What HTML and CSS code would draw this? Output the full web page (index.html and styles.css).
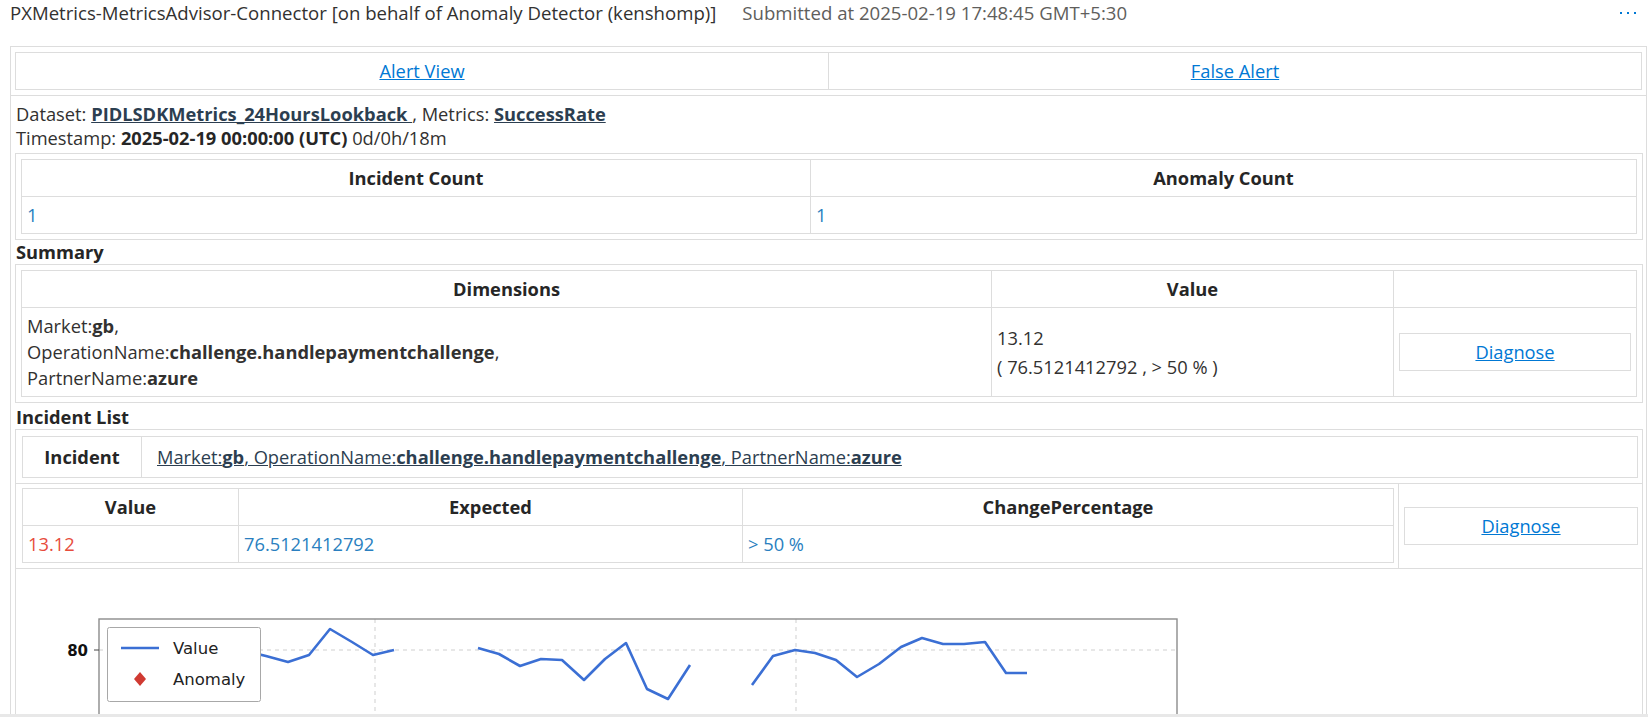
FILE: index.html
```html
<!DOCTYPE html>
<html lang="en">
<head>
<meta charset="utf-8">
<title>Alert</title>
<link rel="stylesheet" href="styles.css">
</head>
<body>
<header class="topbar">
  <span class="subject">PXMetrics-MetricsAdvisor-Connector [on behalf of Anomaly Detector (kenshomp)]</span>
  <span class="submitted">Submitted at 2025-02-19 17:48:45 GMT+5:30</span>
  <span class="more" aria-label="More actions"><i></i><i></i><i></i></span>
</header>

<div class="mail">
  <div class="actions-row">
    <table class="grid actions">
      <tr>
        <td><a href="#" class="link">Alert View</a></td>
        <td><a href="#" class="link">False Alert</a></td>
      </tr>
    </table>
  </div>

  <div class="body-row">
    <div class="meta">
      Dataset: <a href="#" class="dark-link">PIDLSDKMetrics_24HoursLookback </a>, Metrics: <a href="#" class="dark-link">SuccessRate</a><br>
      Timestamp: <b>2025-02-19 00:00:00 (UTC)</b> 0d/0h/18m
    </div>

    <div class="box first">
      <table class="grid counts">
        <colgroup><col class="c-incident"><col></colgroup>
        <tr><th>Incident Count</th><th>Anomaly Count</th></tr>
        <tr><td class="num">1</td><td class="num">1</td></tr>
      </table>
    </div>

    <div class="label">Summary</div>
    <div class="box">
      <table class="grid summary">
        <colgroup><col class="c-dim"><col class="c-val"><col></colgroup>
        <tr><th>Dimensions</th><th>Value</th><th></th></tr>
        <tr>
          <td class="dims">Market:<b>gb</b>,<br>OperationName:<b>challenge.handlepaymentchallenge</b>,<br>PartnerName:<b>azure</b></td>
          <td class="vals">13.12<br>( 76.5121412792 , &gt; 50 % )</td>
          <td class="btn-cell"><a href="#" class="btn">Diagnose</a></td>
        </tr>
      </table>
    </div>

    <div class="label spaced">Incident List</div>
    <table class="incidents">
      <colgroup><col class="c-left"><col></colgroup>
      <tr>
        <td colspan="2" class="inc-head-cell">
          <table class="grid inc-head">
            <colgroup><col class="c-inc"><col></colgroup>
            <tr>
              <th>Incident</th>
              <td><a href="#" class="dark-link light">Market:<b>gb</b>, OperationName:<b>challenge.handlepaymentchallenge</b>, PartnerName:<b>azure</b></a></td>
            </tr>
          </table>
        </td>
      </tr>
      <tr>
        <td class="values-cell">
          <table class="grid values">
            <colgroup><col class="c-v1"><col class="c-v2"><col></colgroup>
            <tr><th>Value</th><th>Expected</th><th>ChangePercentage</th></tr>
            <tr><td class="red">13.12</td><td class="num">76.5121412792</td><td class="num">&gt; 50 %</td></tr>
          </table>
        </td>
        <td class="diag-cell"><a href="#" class="btn">Diagnose</a></td>
      </tr>
      <tr>
        <td colspan="2" class="chart-cell">
          <svg class="chart" width="1200" height="160" viewBox="0 0 1200 160" xmlns="http://www.w3.org/2000/svg">
            <line x1="77" y1="76" x2="1155" y2="76" stroke="#cfcfcf" stroke-width="1" stroke-dasharray="4 4"/>
            <line x1="353" y1="45" x2="353" y2="160" stroke="#cfcfcf" stroke-width="1" stroke-dasharray="4 4"/>
            <line x1="774" y1="45" x2="774" y2="160" stroke="#cfcfcf" stroke-width="1" stroke-dasharray="4 4"/>
            <rect x="77" y="45" width="1078" height="130" fill="none" stroke="#8c8c8c" stroke-width="1.4"/>
            <line x1="72" y1="76" x2="77" y2="76" stroke="#444" stroke-width="1"/>
            <line x1="72" y1="147" x2="77" y2="147" stroke="#444" stroke-width="1"/>
            <text x="66" y="82" text-anchor="end" class="tick">80</text>
            <text x="66" y="153" text-anchor="end" class="tick">60</text>
            <g fill="none" stroke="#3b6fd4" stroke-width="2.6" stroke-linejoin="round">
              <polyline points="180,78 201,80 223,77 244,82 266,88 287,81 308,55 330,68 351,81 372,76"/>
              <polyline points="456,74 477,80 498,92 519,85 540,86 562,106 583,85 604,69 625,115 646,125 668,91"/>
              <polyline points="730,111 751,82 773,76 793,79 814,86 835,103 857,90 879,73 900,64 921,70 942,70 963,68 984,99 1005,99"/>
            </g>
            <rect x="85.5" y="53.5" width="153" height="74" rx="2" fill="#fff" stroke="#a8a8a8" stroke-width="1"/>
            <line x1="99" y1="74" x2="137" y2="74" stroke="#3b6fd4" stroke-width="2.6"/>
            <path d="M118 98 L124 105 L118 112 L112 105 Z" fill="#d03a32"/>
            <text x="151" y="80" class="legend">Value</text>
            <text x="151" y="111" class="legend">Anomaly</text>
          </svg>
        </td>
      </tr>
    </table>
  </div>
</div>
<div class="hscroll"></div>
</body>
</html>
```

FILE: styles.css
```css
html, body {
  margin: 0;
  padding: 0;
  overflow: hidden;
  background: #ffffff;
}

body {
  font-family: "Open Sans", "Segoe UI", "Liberation Sans", sans-serif;
  font-size: 18.3px;
  color: #323130;
}

.topbar {
  display: flex;
  align-items: center;
  height: 26px;
  line-height: 26px;
  padding-left: 10px;
  margin-bottom: 20px;
  font-size: 18.6px;
  white-space: nowrap;
}

.subject {
  color: #323130;
}

.submitted {
  color: #605e5c;
  margin-left: 26px;
}

.more {
  margin-left: auto;
  margin-right: 12px;
  display: flex;
  gap: 5px;
  align-items: center;
}

.more i {
  display: block;
  width: 2px;
  height: 2px;
  background: #0078d4;
}

.mail {
  margin-left: 10px;
  width: 1637px;
  box-sizing: border-box;
  border: 1px solid #dddddd;
  border-bottom: none;
}

.actions-row {
  padding: 5px 4px 5px 4px;
  border-bottom: 1px solid #dddddd;
}

.grid {
  width: 100%;
  border-collapse: collapse;
  table-layout: fixed;
}

.grid th,
.grid td {
  border: 1px solid #dddddd;
  padding: 8px 5px;
  line-height: 20px;
}

.grid th {
  font-weight: bold;
  text-align: center;
  color: #262626;
}

.actions td {
  text-align: center;
}

.link {
  color: #0078d4;
  text-decoration: underline;
}

.dark-link {
  color: #2c3e50;
  font-weight: bold;
  text-decoration: underline;
}

.dark-link.light {
  font-weight: normal;
}

.body-row {
  padding: 6px 3px 0 4px;
}

.meta {
  line-height: 24px;
  padding-left: 1px;
}

.meta b {
  color: #262626;
}

.box {
  border: 1px solid #dddddd;
  padding: 5px;
}

.box.first {
  margin-top: 3px;
}

.label {
  font-weight: bold;
  line-height: 24px;
  padding-left: 1px;
  color: #262626;
}

.label.spaced {
  margin-top: 2px;
}

.c-incident { width: 789px; }
.c-dim { width: 970px; }
.c-val { width: 402px; }
.c-inc { width: 119px; }
.c-v1 { width: 216px; }
.c-v2 { width: 504px; }
.c-left { width: 1383px; }

.num {
  color: #2a7fc0;
}

.red {
  color: #e74c3c;
}

.grid td.dims {
  line-height: 26px;
  padding-top: 5px;
  padding-bottom: 5px;
  vertical-align: middle;
}

.grid td.vals {
  line-height: 29px;
  padding-top: 5px;
  padding-bottom: 5px;
  vertical-align: middle;
}

.grid td.btn-cell {
  padding: 5px;
  vertical-align: middle;
}

.btn {
  display: block;
  border: 1px solid #dddddd;
  padding: 8px;
  line-height: 20px;
  text-align: center;
  color: #0078d4;
  text-decoration: underline;
}

.incidents {
  width: 100%;
  border-collapse: collapse;
  table-layout: fixed;
  border: 1px solid #dddddd;
}

.incidents > tbody > tr > td {
  border: 1px solid #dddddd;
}

.inc-head-cell {
  padding: 6px 4px 5px 6px;
}

.inc-head th,
.inc-head td {
  line-height: 24px;
}

.inc-head td {
  padding-left: 15px;
}

.values-cell {
  padding: 4px 4px 5px 6px;
}

.diag-cell {
  padding: 0 4px 0 5px;
  vertical-align: middle;
}

.chart-cell {
  padding: 5px 0 0 6px;
  height: 200px;
  vertical-align: top;
}

.chart {
  display: block;
}

.chart .tick {
  font-family: "DejaVu Sans", sans-serif;
  font-size: 15px;
  font-weight: bold;
  fill: #111111;
}

.chart .legend {
  font-family: "DejaVu Sans", sans-serif;
  font-size: 16.5px;
  fill: #222222;
}

.hscroll {
  position: fixed;
  left: 0;
  right: 0;
  bottom: 0;
  height: 3px;
  background: #e8e8e8;
}
```
